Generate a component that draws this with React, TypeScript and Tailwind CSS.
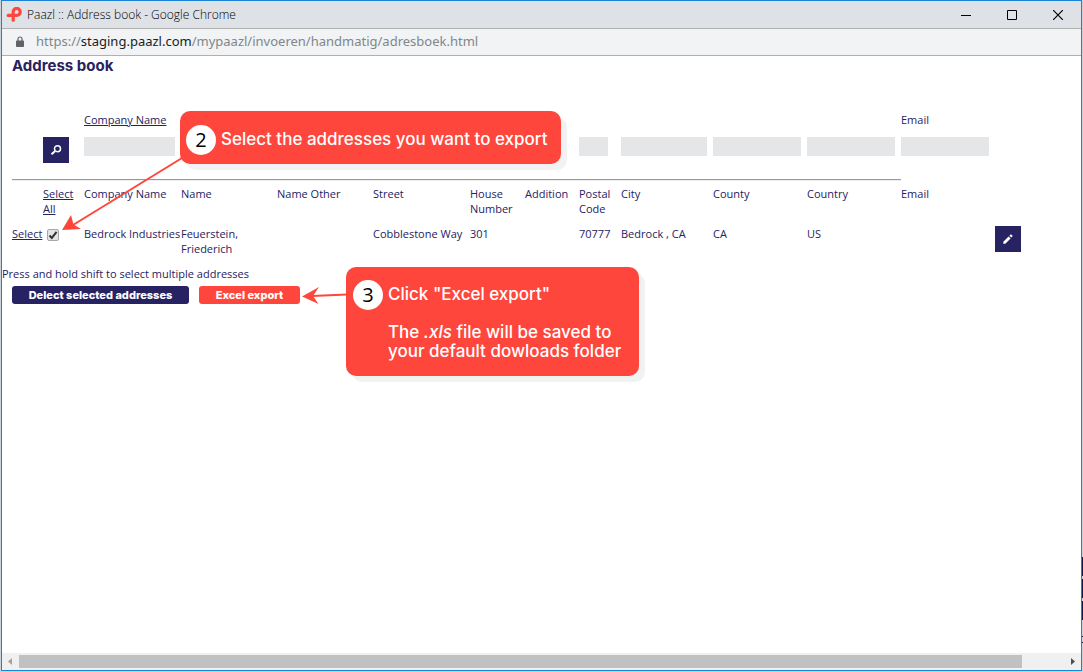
import type { ReactNode } from 'react';

interface Column {
  title: string;
  width: string;
  input?: string;
  label?: 'link' | 'text';
  value?: string;
}

const columns: Column[] = [
  { title: 'Company Name', width: 'w-[97px]', input: 'w-[91px]', label: 'link', value: 'Bedrock Industries' },
  { title: 'Name', width: 'w-[96px]', value: 'Feuerstein, Friederich' },
  { title: 'Name Other', width: 'w-[96px]' },
  { title: 'Street', width: 'w-[97px]', value: 'Cobblestone Way' },
  { title: 'House Number', width: 'w-[55px]', value: '301' },
  { title: 'Addition', width: 'w-[54px]' },
  { title: 'Postal Code', width: 'w-[42px]', input: 'w-[29px]', value: '70777' },
  { title: 'City', width: 'w-[92px]', input: 'w-[86px]', value: 'Bedrock , CA' },
  { title: 'County', width: 'w-[94px]', input: 'w-[88px]', value: 'CA' },
  { title: 'Country', width: 'w-[94px]', input: 'w-[88px]', value: 'US' },
  { title: 'Email', width: 'w-[94px]', input: 'w-[88px]', label: 'text' },
];

const wraps = ['Name', 'House Number', 'Postal Code'];

function TitleBar() {
  return (
    <header className="flex h-7 items-center border-b border-[#b0b0b0] bg-[#dee1e6] text-black">
      <svg className="ml-1 h-4 w-4 shrink-0" viewBox="0 0 16 16" fill="none" stroke="#ff463c" strokeWidth="3.2">
        <path d="M7.200 13.200V4.900a3.500 3.500 0 1 1 3.500 3.500H2.200" strokeLinecap="round" />
      </svg>
      <span className="ml-[5px] flex-1 text-[12px] font-light">Paazl :: Address book - Google Chrome</span>
      <button aria-label="Minimize" className="flex h-full w-[46px] items-center justify-center">
        <svg width="10" height="10" shapeRendering="crispEdges"><path d="M0 5.5h10" stroke="#000" /></svg>
      </button>
      <button aria-label="Maximize" className="flex h-full w-[46px] items-center justify-center">
        <svg width="10" height="10"><path d="M.5.5h9v9h-9z" fill="none" stroke="#000" /></svg>
      </button>
      <button aria-label="Close" className="flex h-full w-[46px] items-center justify-center">
        <svg width="10" height="10"><path d="M0 0l10 10M10 0L0 10" stroke="#000" strokeWidth="1.2" /></svg>
      </button>
    </header>
  );
}

function AddressBar() {
  return (
    <div className="flex h-[27px] items-center border-b border-[#b0b0b0] bg-[#f1f3f4] font-['Noto_Sans'] text-[13px] text-[#80868b]">
      <svg className="ml-3.5 h-3 w-2 shrink-0" viewBox="0 0 8 12">
        <path d="M2 5V3a2 2 0 0 1 4 0v2" fill="none" stroke="#5f6368" strokeWidth="1.2" />
        <rect y="4.5" width="8" height="6.5" rx=".8" fill="#5f6368" />
      </svg>
      <span className="ml-3">
        https://<span className="text-[#202124]">staging.paazl.com</span>/mypaazl/invoeren/handmatig/adresboek.html
      </span>
    </div>
  );
}

function IconButton({ label, children }: { label: string; children: ReactNode }) {
  return (
    <button aria-label={label} className="flex h-[26px] w-[26px] items-center justify-center bg-[#272262]">
      {children}
    </button>
  );
}

function AddressTable() {
  return (
    <table className="ml-2.5 mt-[37px] w-[1009px] table-fixed border-collapse text-left text-[11px] leading-[15px]">
      <colgroup>
        <col className="w-[31px]" />
        <col className="w-[41px]" />
        {columns.map(c => (
          <col key={c.title} className={c.width} />
        ))}
        <col className="w-[26px]" />
      </colgroup>
      <tbody className="align-top">
        <tr className="h-[25px] font-medium">
          <td colSpan={2} />
          {columns.map(c => (
            <td key={c.title} className="whitespace-nowrap">
              {c.label === 'link' && <a href="#company" className="underline">{c.title}</a>}
              {c.label === 'text' && <label htmlFor={c.title}>{c.title}</label>}
            </td>
          ))}
          <td />
        </tr>
        <tr className="h-[42px]">
          <td />
          <td>
            <IconButton label="Search">
              <svg width="12" height="12" viewBox="0 0 12 12" fill="none" stroke="#fff">
                <circle cx="7.5" cy="4.7" r="3" strokeWidth="1.5" />
                <path d="M5.2 7L1.5 10.3" strokeWidth="2" />
              </svg>
            </IconButton>
          </td>
          {columns.map(c => (
            <td key={c.title}>
              {c.input && <input id={c.title} aria-label={c.title} className={`block h-[19px] bg-[#e5e6e8] ${c.input}`} />}
            </td>
          ))}
          <td />
        </tr>
        <tr>
          <td colSpan={12}>
            <hr className="h-[2px] border-b border-t border-b-[#eee] border-t-[#999]" />
          </td>
          <td colSpan={2} />
        </tr>
        <tr className="h-[45px] font-medium">
          <td />
          <th className="pr-2 pt-[5px] font-medium"><a href="#all" className="underline">Select All</a></th>
          {columns.map(c => (
            <th key={c.title} className={`pt-[5px] font-medium ${wraps.includes(c.title) ? '' : 'whitespace-nowrap'}`}>{c.title}</th>
          ))}
          <td />
        </tr>
        <tr className="h-10">
          <td><a href="#row" className="underline">Select</a></td>
          <td className="pl-1 pt-[3px]">
            <label className="grid h-3 w-3">
              <input
                type="checkbox"
                defaultChecked
                aria-label="Select"
                className="col-start-1 row-start-1 h-3 w-3 appearance-none rounded-xs border border-[#a8a8a8] bg-[#e4e4e4]"
              />
              <svg className="pointer-events-none col-start-1 row-start-1 h-3 w-3" viewBox="0 0 12 12">
                <path d="M2.5 6.5l2.3 2.4L9.6 2.8" fill="none" stroke="#333" strokeWidth="2" />
              </svg>
            </label>
          </td>
          {columns.map(c => (
            <td key={c.title} className={wraps.includes(c.title) ? '' : 'whitespace-nowrap'}>{c.value}</td>
          ))}
          <td>
            <IconButton label="Edit">
              <svg width="10" height="10" viewBox="0 0 10 10" fill="#fff">
                <path d="M.3 9.700V7.700L5.600 2.400l2 2L2.300 9.700zM6.400 1.700L7.900.2l1.900 1.900-1.500 1.500z" />
              </svg>
            </IconButton>
          </td>
        </tr>
      </tbody>
    </table>
  );
}

function Callout({ step, place, children }: { step: number; place: string; children: ReactNode }) {
  return (
    <aside className={`absolute flex rounded-[10px] bg-[#ff463c] text-white shadow-[6px_6px_0_#f2f2f2] ${place}`}>
      <span className="flex h-[30px] w-[30px] shrink-0 items-center justify-center rounded-full bg-white text-[20px] text-black">
        {step}
      </span>
      <div className="whitespace-nowrap pt-[5px] font-[Inter] text-[17px] font-medium leading-[19px]">{children}</div>
    </aside>
  );
}

function Scrollbar() {
  return (
    <footer className="flex h-[17px] items-center bg-[#f0f0f0]">
      <svg className="h-[17px] w-[17px] shrink-0" viewBox="0 0 17 17"><path d="M10 5v7L6 8.500z" fill="#a3a3a3" /></svg>
      <div className="flex-1">
        <div className="h-[13px] w-[96%] bg-[#c1c1c1]" />
      </div>
      <svg className="h-[17px] w-[17px] shrink-0" viewBox="0 0 17 17"><path d="M7 5v7l4-3.500z" fill="#505050" /></svg>
    </footer>
  );
}

export default function App() {
  return (
    <div className="flex min-h-screen bg-[#c9d3dc] pb-px pl-px font-['Open_Sans',sans-serif]">
      <div className="flex min-w-0 flex-1 flex-col border border-[#1883d7] bg-white">
        <TitleBar />
        <AddressBar />
        <main className="relative flex-1 overflow-hidden text-[#272262]">
          <h1 className="pl-2.5 font-[Inter] text-[15px] font-bold leading-[19px]">Address book</h1>
          <AddressTable />
          <p className="text-[11px] leading-[16px]">Press and hold shift to select multiple addresses</p>
          <div className="flex gap-2.5 pl-2.5 pt-1 font-[Inter] text-[11px] font-extrabold leading-[18px] text-white">
            <button className="w-[177px] rounded-[3px] bg-[#272262]">Delect selected addresses</button>
            <button className="w-[101px] rounded-[3px] bg-[#ff463c]">Excel export</button>
          </div>

          <Callout step={2} place="left-[178px] top-[55px] h-[53px] w-[381px] gap-[5px] pl-1.5 pt-3.5">
            <p>Select the addresses you want to export</p>
          </Callout>
          <Callout step={3} place="left-[344px] top-[211px] h-[109px] w-[293px] gap-[5px] pl-[7px] pt-[13px]">
            <p>Click "Excel export"</p>
            <p className="pt-[19px]">
              The <em>.xls</em> file will be saved to
              <br />
              your default dowloads folder
            </p>
          </Callout>

          <svg className="pointer-events-none absolute left-[58px] top-[100px]" width="124" height="76" fill="#ff463c">
            <path d="M122 2L13 69" stroke="#ff463c" strokeWidth="2" />
            <path d="M2 74l9-15 2.500 9.500L21 73z" />
          </svg>
          <svg className="pointer-events-none absolute left-[298px] top-[229px]" width="48" height="22" fill="#ff463c">
            <path d="M47 9.500L12 11" stroke="#ff463c" strokeWidth="2" />
            <path d="M2 11.500L19 2l-6 9 5.500 8z" />
          </svg>
        </main>
        <Scrollbar />
      </div>
      <div className="flex w-px flex-col justify-end gap-[3px] pb-7">
        <div className="h-[19px] bg-[#0b1c4d]" />
        <div className="h-[19px] bg-[#0b1c4d]" />
        <div className="h-[19px] bg-[#0b1c4d]" />
        <div className="mt-[13px] h-px bg-[#0b1c4d]" />
        <div className="mt-[2px] h-px bg-[#0b1c4d]" />
      </div>
    </div>
  );
}
